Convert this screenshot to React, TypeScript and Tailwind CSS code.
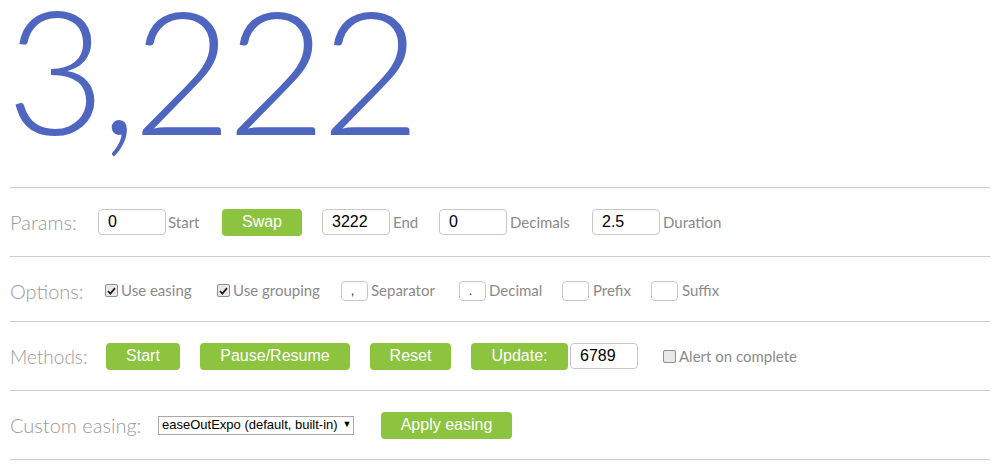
import React from "react";

function Label({ children, w }: { children: React.ReactNode; w: string }) {
  return (
    <span
      className={
        "shrink-0 whitespace-nowrap text-[20px] font-light text-[#9a9a9a] [font-family:Lato,sans-serif] leading-none " + w
      }
    >
      {children}
    </span>
  );
}

function Small({ children, className = "" }: { children: React.ReactNode; className?: string }) {
  return (
    <span
      className={
        "shrink-0 whitespace-nowrap text-[15px] text-[#8a8a8a] [font-family:Lato,sans-serif] leading-none " + className
      }
    >
      {children}
    </span>
  );
}

function TextBox({ value, className = "" }: { value: string; className?: string }) {
  return (
    <div
      className={
        "flex h-[26px] w-[68px] shrink-0 items-center rounded-[4px] border border-[#c8c8c8] bg-white pl-[9px] text-[16px] text-black [font-family:'Liberation_Sans',Arial,sans-serif] " +
        className
      }
    >
      {value}
    </div>
  );
}

function MiniBox({ value }: { value: string }) {
  return (
    <div className="flex h-[20px] w-[27px] shrink-0 items-center justify-center rounded-[4px] border border-[#c8c8c8] bg-white text-[13px] text-[#333] [font-family:'Liberation_Sans',Arial,sans-serif]">
      <span className="-translate-x-[2px]">{value}</span>
    </div>
  );
}

function Btn({ children, w }: { children: React.ReactNode; w: string }) {
  return (
    <div
      className={
        "flex h-[27px] shrink-0 items-center justify-center rounded-[4px] bg-[#8cc43f] text-[16px] text-white [font-family:'Liberation_Sans',Arial,sans-serif] " +
        w
      }
    >
      {children}
    </div>
  );
}

function Check({ checked }: { checked: boolean }) {
  return (
    <span className="mr-[3px] flex h-[13px] w-[13px] shrink-0 items-center justify-center rounded-[2px] border border-[#8f8f8f] bg-[#e8e8e8]">
      {checked && (
        <svg width="9" height="8" viewBox="0 0 9 8">
          <path d="M1 4.2 L3.4 6.6 L8 1.2" fill="none" stroke="#222" strokeWidth="1.8" />
        </svg>
      )}
    </span>
  );
}

export default function App() {
  return (
    <div className="w-[996px] h-[471px] bg-white pl-[10px] pr-[6px] overflow-hidden">
      <div className="flex h-[187px] flex-col">
        <div className="-ml-[4px] -mt-[1px] whitespace-nowrap text-[#4f66c0] font-light leading-[140px] [font-family:Lato,sans-serif] text-[172px] tracking-[-5.5px]">
          3,222
        </div>
      </div>

      <div className="flex h-[69px] items-center border-t border-[#cccccc]">
        <Label w="w-[88px]">Params:</Label>
        <TextBox value="0" />
        <Small className="ml-[2px] w-[54px]">Start</Small>
        <Btn w="w-[80px]">Swap</Btn>
        <TextBox value="3222" className="ml-[20px]" />
        <Small className="ml-[3px] w-[46px]">End</Small>
        <TextBox value="0" />
        <Small className="ml-[3px] w-[82px]">Decimals</Small>
        <TextBox value="2.5" />
        <Small className="ml-[3px]">Duration</Small>
      </div>

      <div className="flex h-[65px] items-center border-t border-[#cccccc] pt-[3px]">
        <Label w="w-[95px]">Options:</Label>
        <Check checked />
        <Small className="w-[96px]">Use easing</Small>
        <Check checked />
        <Small className="w-[108px]">Use grouping</Small>
        <MiniBox value="," />
        <Small className="ml-[3px] w-[88px]">Separator</Small>
        <MiniBox value="." />
        <Small className="ml-[3px] w-[73px]">Decimal</Small>
        <MiniBox value="" />
        <Small className="ml-[4px] w-[58px]">Prefix</Small>
        <MiniBox value="" />
        <Small className="ml-[4px]">Suffix</Small>
      </div>

      <div className="flex h-[69px] items-center border-t border-[#cccccc]">
        <Label w="w-[96px]">
          <span className="text-[19px]">Methods:</span>
        </Label>
        <Btn w="w-[74px]">Start</Btn>
        <span className="w-[20px] shrink-0" />
        <Btn w="w-[150px]">Pause/Resume</Btn>
        <span className="w-[20px] shrink-0" />
        <Btn w="w-[81px]">Reset</Btn>
        <span className="w-[20px] shrink-0" />
        <Btn w="w-[97px]">Update:</Btn>
        <TextBox value="6789" className="ml-[2px]" />
        <span className="ml-[25px] flex items-center">
          <Check checked={false} />
          <Small>Alert on complete</Small>
        </span>
      </div>

      <div className="flex h-[70px] items-center border-t border-b border-[#cccccc]">
        <Label w="w-[148px]">Custom easing:</Label>
        <div className="flex h-[19px] w-[196px] shrink-0 items-center border border-[#a9a9a9] bg-white pl-[3px] text-[13px] text-black [font-family:'Liberation_Sans',Arial,sans-serif]">
          <span className="whitespace-nowrap">easeOutExpo (default, built-in)</span>
          <span className="ml-[5px] text-[9px]">▼</span>
        </div>
        <span className="w-[27px] shrink-0" />
        <Btn w="w-[131px]">Apply easing</Btn>
      </div>
    </div>
  );
}
